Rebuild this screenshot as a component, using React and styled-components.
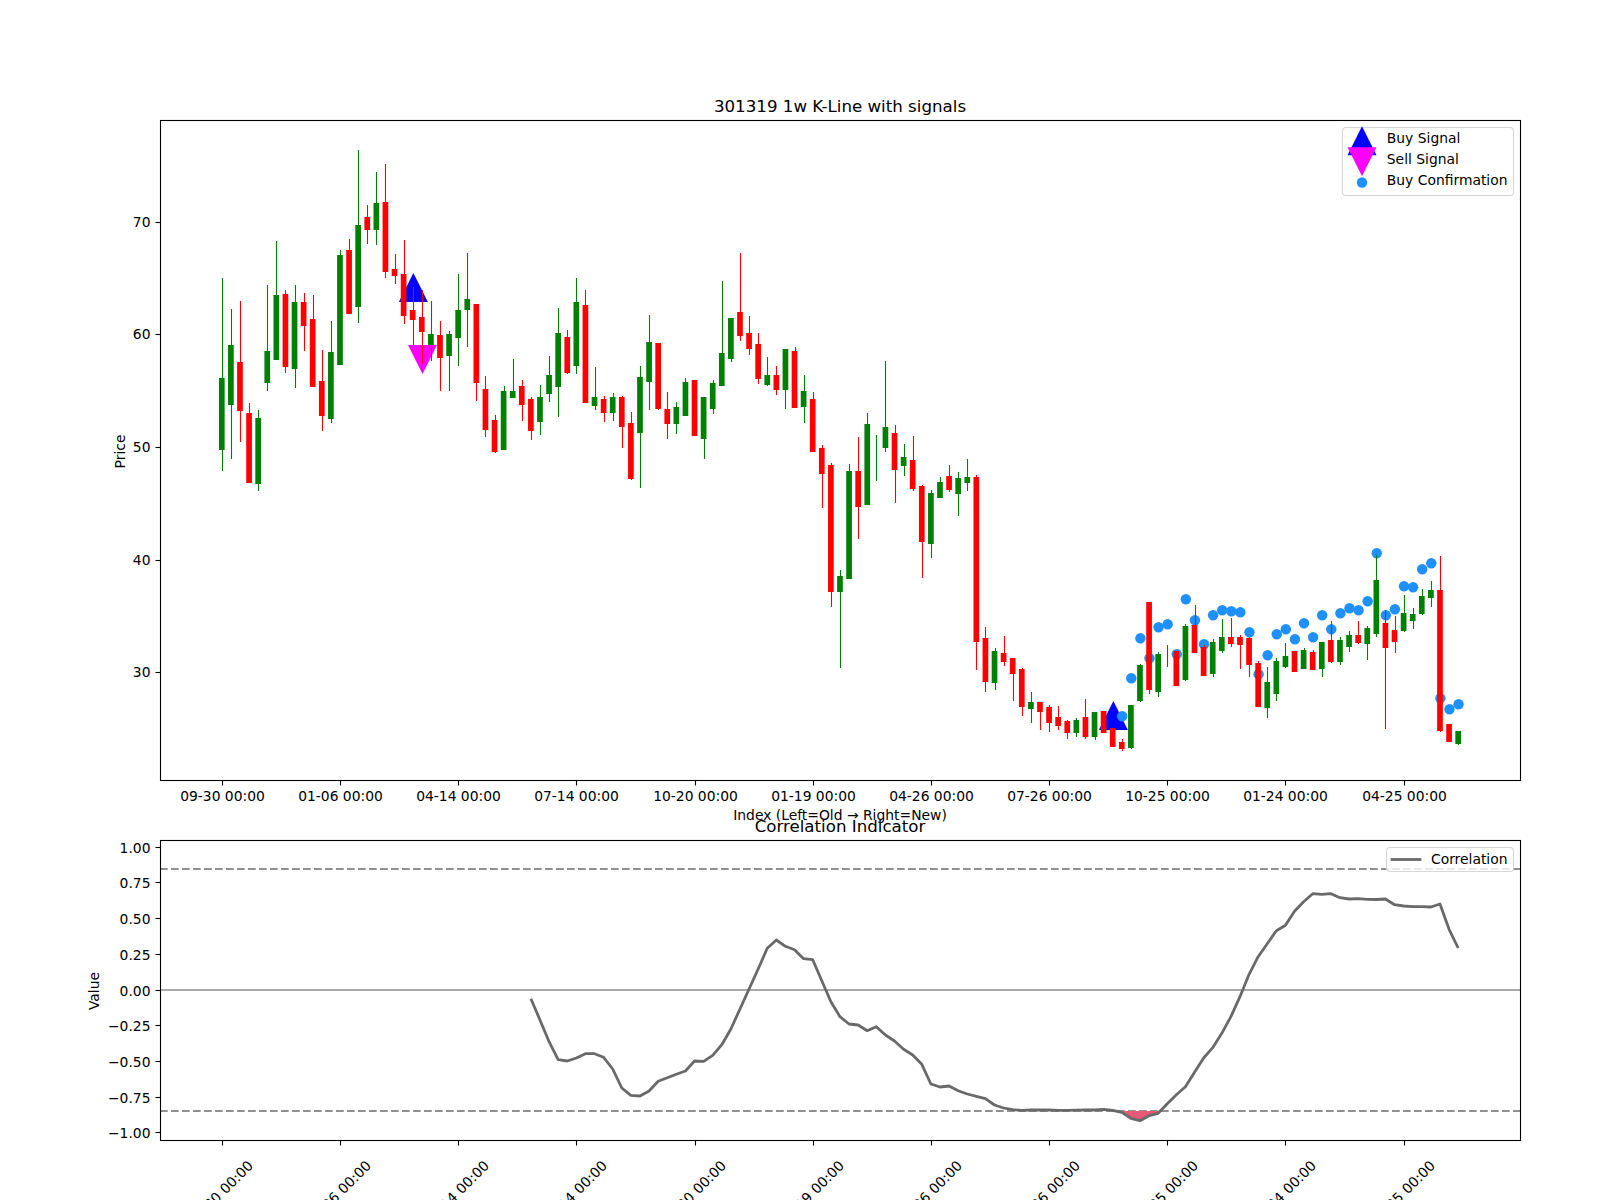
import styled, { createGlobalStyle } from 'styled-components';

const GlobalStyle = createGlobalStyle`
  html, body {
    margin: 0;
    padding: 0;
    background: #fff;
  }
`;

const Figure = styled.div`
  width: 1600px;
  height: 1200px;
  box-sizing: border-box;
  padding: 120px 0 0 160px;
  display: flex;
  flex-direction: column;
  gap: 60px;
  overflow: hidden;
  background: #fff;
  font-family: "DejaVu Sans", sans-serif;
`;

const Axes = styled.div`
  position: relative;
  width: 1360px;
  height: ${props => props.h}px;
`;

const Plot = styled.svg`
  display: block;
  overflow: visible;
`;

const Title = styled.text`
  font-family: "DejaVu Sans", sans-serif;
  font-size: 16.67px;
  text-anchor: middle;
  fill: #000;
`;

const AxisLabel = styled.text`
  font-family: "DejaVu Sans", sans-serif;
  font-size: 13.89px;
  text-anchor: middle;
  fill: #000;
`;

const TickLabel = styled.text`
  font-family: "DejaVu Sans", sans-serif;
  font-size: 13.89px;
  text-anchor: ${props => props.anchor || 'middle'};
  dominant-baseline: central;
  fill: #000;
`;

const Legend = styled.div`
  position: absolute;
  top: 7px;
  right: 6px;
  box-sizing: border-box;
  padding: ${props => props.pad};
  display: flex;
  flex-direction: column;
  background: rgba(255, 255, 255, 0.8);
  border: 1px solid rgba(204, 204, 204, 0.8);
  border-radius: 4px;
`;

const LegendRow = styled.div`
  display: flex;
  align-items: center;
  gap: 11px;
  height: 21px;
  font-size: 13.89px;
  color: #000;
  white-space: nowrap;
`;

const LegendText = styled.span`
  margin-top: -2px;
`;

const LegendMark = styled.svg`
  display: block;
  flex: none;
  overflow: visible;
`;

// pixel rows read off the chart: colour, wick top, body top, body bottom, wick bottom
const candles = [
  ['g', 278, 378, 450, 471], ['g', 309, 345, 405, 459], ['r', 301, 362, 411, 442], ['r', 403, 413, 483, 483],
  ['g', 410, 418, 484, 491], ['g', 285, 351, 383, 391], ['g', 241, 295, 360, 360], ['r', 290, 294, 367, 373],
  ['g', 285, 302, 369, 388], ['r', 293, 302, 326, 351], ['r', 295, 319, 387, 387], ['r', 350, 381, 416, 431],
  ['g', 321, 352, 419, 423], ['g', 250, 255, 365, 365], ['r', 239, 250, 314, 314], ['g', 150, 225, 307, 323],
  ['r', 205, 217, 230, 244], ['g', 172, 203, 230, 245], ['r', 164, 202, 272, 278], ['r', 254, 269, 276, 284],
  ['r', 240, 274, 316, 324], ['r', 287, 310, 320, 346], ['r', 290, 317, 332, 364], ['g', 301, 334, 345, 361],
  ['r', 321, 335, 358, 391], ['g', 331, 334, 356, 391], ['g', 274, 310, 338, 366], ['g', 253, 299, 310, 347],
  ['r', 304, 304, 383, 401], ['r', 376, 389, 430, 437], ['r', 415, 420, 452, 453], ['g', 386, 391, 450, 450],
  ['g', 359, 391, 398, 398], ['r', 380, 386, 405, 421], ['r', 397, 399, 431, 440], ['g', 385, 397, 422, 435],
  ['g', 356, 375, 394, 402], ['g', 308, 333, 387, 417], ['r', 330, 337, 373, 374], ['g', 278, 302, 366, 374],
  ['r', 290, 305, 403, 403], ['g', 367, 397, 406, 410], ['r', 396, 399, 413, 422], ['g', 393, 397, 413, 421],
  ['r', 396, 397, 427, 448], ['r', 412, 423, 479, 480], ['g', 366, 377, 433, 488], ['g', 315, 342, 382, 410],
  ['r', 343, 343, 409, 410], ['r', 392, 409, 424, 439], ['g', 402, 407, 424, 434], ['g', 378, 382, 416, 416],
  ['r', 380, 380, 436, 436], ['g', 397, 397, 439, 459], ['g', 380, 383, 409, 414], ['g', 281, 353, 386, 386],
  ['g', 318, 318, 359, 362], ['r', 253, 312, 336, 341], ['r', 316, 333, 349, 355], ['r', 333, 344, 379, 384],
  ['g', 357, 375, 385, 386], ['r', 366, 375, 390, 395], ['g', 349, 349, 390, 409], ['r', 347, 351, 408, 408],
  ['g', 375, 391, 407, 423], ['r', 392, 399, 452, 452], ['r', 445, 448, 474, 508], ['r', 463, 465, 592, 607],
  ['g', 570, 576, 592, 668], ['g', 464, 471, 579, 579], ['r', 437, 471, 507, 539], ['g', 413, 424, 505, 505],
  ['g', 435, 458, 458, 481], ['g', 361, 427, 448, 452], ['r', 425, 433, 470, 503], ['g', 444, 457, 466, 476],
  ['r', 436, 460, 489, 491], ['r', 485, 486, 542, 578], ['g', 490, 493, 544, 558], ['g', 477, 482, 498, 498],
  ['r', 465, 476, 490, 492], ['g', 472, 478, 494, 516], ['g', 459, 477, 483, 491], ['r', 475, 477, 642, 670],
  ['r', 627, 638, 682, 692], ['g', 648, 651, 683, 690], ['r', 636, 653, 662, 666], ['r', 658, 658, 674, 701],
  ['r', 668, 669, 707, 716], ['g', 692, 702, 709, 723], ['r', 702, 702, 712, 730], ['r', 705, 707, 723, 732],
  ['r', 706, 717, 726, 730], ['r', 720, 721, 733, 739], ['g', 718, 720, 733, 737], ['r', 699, 717, 737, 739],
  ['g', 712, 712, 737, 740], ['r', 711, 711, 733, 733], ['r', 728, 728, 747, 747], ['r', 739, 742, 749, 751],
  ['g', 705, 705, 748, 749], ['g', 664, 665, 701, 702], ['r', 602, 602, 690, 694], ['g', 652, 654, 692, 697],
  ['r', 645, 655, 655, 667], ['r', 651, 651, 686, 686], ['g', 624, 626, 680, 681], ['r', 605, 625, 653, 653],
  ['r', 645, 647, 676, 676], ['g', 639, 642, 674, 677], ['g', 619, 637, 651, 653], ['r', 618, 637, 644, 647],
  ['r', 635, 637, 645, 669], ['r', 637, 638, 665, 677], ['r', 661, 663, 707, 707], ['g', 667, 682, 708, 718],
  ['g', 658, 661, 694, 701], ['g', 643, 656, 667, 668], ['r', 651, 651, 672, 672], ['g', 648, 650, 669, 669],
  ['r', 650, 652, 670, 670], ['g', 642, 642, 669, 677], ['r', 621, 640, 662, 663], ['g', 637, 640, 662, 665],
  ['g', 631, 635, 647, 652], ['r', 621, 635, 643, 644], ['g', 626, 628, 644, 660], ['g', 555, 580, 634, 637],
  ['r', 610, 623, 648, 729], ['r', 616, 630, 642, 653], ['g', 595, 613, 631, 632], ['g', 608, 614, 621, 629],
  ['g', 589, 596, 614, 615], ['g', 581, 590, 598, 607], ['r', 556, 590, 731, 732], ['r', 724, 724, 742, 742],
  ['g', 731, 731, 744, 745],
];

// buy confirmation dots, from index 99 on
const dots = [
  716.3, 678.3, 638.3, 658.3, 627.3, 624.3, 654.3, 599.3, 620.3, 644.3, 615.3, 610.3, 611.3, 612.3,
  632.3, 674.3, 655.3, 634.3, 629.3, 639.3, 623.3, 637.3, 615.3, 629.3, 613.3, 608.3, 610.3, 601.3,
  553.3, 615.3, 609.3, 586.3, 587.3, 569.3, 563.3, 698.3, 709.3, 704.3,
];

// correlation line, from index 34 on
const corr = [
  998.7, 1020, 1041.7, 1059.7, 1061, 1058, 1053.7, 1053.7, 1057.3, 1069, 1088, 1095.3, 1096, 1091, 1081.3, 1077.7,
  1074.3, 1071, 1061, 1061.3, 1055.3, 1044.7, 1029, 1009, 989, 969, 948.3, 940, 946.3, 949.7, 958.7, 959.7,
  980.7, 1001.7, 1016.7, 1024, 1025, 1030.7, 1026.7, 1035, 1041, 1049.3, 1055, 1064.3, 1084, 1087, 1086, 1090.7,
  1094, 1096.3, 1098.7, 1105, 1108, 1109.7, 1110.3, 1110, 1110, 1110, 1110.3, 1110.3, 1110.2, 1110, 1110, 1109.3,
  1110.3, 1112.3, 1118.3, 1120.7, 1115.7, 1113.3, 1103.7, 1094.7, 1086.7, 1072.3, 1058, 1047.7, 1033.3, 1016.7,
  996.7, 974.3, 956.7, 943.7, 930.7, 925.3, 911.3, 901.7, 893.7, 894.3, 893.7, 897.7, 899, 898.7, 899.3, 899.5,
  899, 904.7, 906, 906.7, 906.7, 907, 904, 929.3, 948,
];

const xAt = i => 221.8 + 9.0909 * i;
const snap = v => Math.round(v) + 0.5;

const dateLabels = [
  '09-30 00:00', '01-06 00:00', '04-14 00:00', '07-14 00:00', '10-20 00:00', '01-19 00:00',
  '04-26 00:00', '07-26 00:00', '10-25 00:00', '01-24 00:00', '04-25 00:00',
];
const dateTicks = dateLabels.map((label, n) => ({ label, x: snap(xAt(n * 13)) }));

const priceTicks = [
  { label: '70', y: 222.5 },
  { label: '60', y: 334.5 },
  { label: '50', y: 447.5 },
  { label: '40', y: 560.5 },
  { label: '30', y: 672.5 },
];

const valueTicks = [1, 0.75, 0.5, 0.25, 0, -0.25, -0.5, -0.75, -1].map(v => ({
  label: v.toFixed(2).replace('-', '\u2212'),
  y: snap(990 - v * 142.86 - 0.5),
}));

const triangle = (x, y, down) =>
  down
    ? `${x - 14.5},${y} ${x + 14.5},${y} ${x},${y + 29}`
    : `${x},${y} ${x + 14.5},${y + 29} ${x - 14.5},${y + 29}`;

const Candle = ({ i, data }) => {
  const [c, wickTop, top, bottom, wickBottom] = data;
  const color = c === 'g' ? '#008000' : '#ff0000';
  const x = xAt(i);
  return (
    <g>
      <line x1={snap(x)} x2={snap(x)} y1={wickTop} y2={wickBottom} stroke={color} strokeWidth="1.1" />
      {bottom > top && <rect x={x - 2.85} y={top} width="5.7" height={bottom - top} fill={color} />}
    </g>
  );
};

const PriceChart = () => (
  <Axes h={660}>
    <Plot viewBox="160 120 1360 660" width="1360" height="660">
      <Title x="840" y="111.7">301319 1w K-Line with signals</Title>

      <polygon points={triangle(413.4, 273, false)} fill="#0000ff" />
      <polygon points={triangle(422.5, 345, true)} fill="#ff00ff" />
      <polygon points={triangle(1113.4, 701, false)} fill="#0000ff" />
      {dots.map((y, n) => (
        <circle key={n} cx={xAt(n + 99) + 0.4} cy={y} r="5.2" fill="#1e90ff" />
      ))}
      {candles.map((data, i) => (
        <Candle key={i} i={i} data={data} />
      ))}

      <rect x="160.5" y="120.5" width="1360" height="660" fill="none" stroke="#000" strokeWidth="1.1" />
      {priceTicks.map(t => (
        <g key={t.label}>
          <line x1="155.5" x2="160.5" y1={t.y} y2={t.y} stroke="#000" strokeWidth="1.1" />
          <TickLabel x="150.5" y={t.y - 0.5} anchor="end">{t.label}</TickLabel>
        </g>
      ))}
      {dateTicks.map(t => (
        <g key={t.label}>
          <line x1={t.x} x2={t.x} y1="780.5" y2="785.5" stroke="#000" strokeWidth="1.1" />
          <TickLabel x={t.x} y="796">{t.label}</TickLabel>
        </g>
      ))}
      <AxisLabel x="840" y="820">Index (Left=Old → Right=New)</AxisLabel>
      <AxisLabel transform="translate(125 451.5) rotate(-90)">Price</AxisLabel>
    </Plot>
    <Legend pad="0 5.5px 4px 4.5px">
      <LegendRow>
        <LegendMark width="28" height="21" viewBox="0 0 28 21">
          <polygon points="14,-1.8 28.5,27.2 -0.5,27.2" fill="#0000ff" />
        </LegendMark>
        <LegendText>Buy Signal</LegendText>
      </LegendRow>
      <LegendRow>
        <LegendMark width="28" height="21" viewBox="0 0 28 21">
          <polygon points="-0.5,-1.8 28.5,-1.8 14,27.2" fill="#ff00ff" />
        </LegendMark>
        <LegendText>Sell Signal</LegendText>
      </LegendRow>
      <LegendRow>
        <LegendMark width="28" height="21" viewBox="0 0 28 21">
          <circle cx="14" cy="12.5" r="5.2" fill="#1e90ff" />
        </LegendMark>
        <LegendText>Buy Confirmation</LegendText>
      </LegendRow>
    </Legend>
  </Axes>
);

const CorrelationChart = () => {
  const line = corr.map((y, n) => `${xAt(n + 34)},${y}`).join(' ');
  const below = corr.slice(99 - 34, 104 - 34).map((y, n) => `${xAt(n + 99)},${y}`);
  const fill = [`${xAt(99)},1111`, ...below, `${xAt(103)},1111`].join(' ');

  return (
    <Axes h={300}>
      <Plot viewBox="160 840 1360 300" width="1360" height="300">
        <Title x="840" y="831.7">Correlation Indicator</Title>

        <line x1="160" x2="1520" y1="869" y2="869" stroke="#909090" strokeWidth="2" strokeDasharray="7.7 3.3" />
        <line x1="160" x2="1520" y1="1111" y2="1111" stroke="#909090" strokeWidth="2" strokeDasharray="7.7 3.3" />
        <line x1="160" x2="1520" y1="990" y2="990" stroke="#aaaaaa" strokeWidth="2" />
        <polygon points={fill} fill="#e75a77" />
        <polyline points={line} fill="none" stroke="#696969" strokeWidth="2.78" strokeLinejoin="round" />

        <rect x="160.5" y="840.5" width="1360" height="300" fill="none" stroke="#000" strokeWidth="1.1" />
        {valueTicks.map(t => (
          <g key={t.label}>
            <line x1="155.5" x2="160.5" y1={t.y} y2={t.y} stroke="#000" strokeWidth="1.1" />
            <TickLabel x="150.5" y={t.y} anchor="end">{t.label}</TickLabel>
          </g>
        ))}
        {dateTicks.map(t => (
          <g key={t.label}>
            <line x1={t.x} x2={t.x} y1="1140.5" y2="1145.5" stroke="#000" strokeWidth="1.1" />
            <TickLabel x={t.x - 2} y="1193" transform={`rotate(-45 ${t.x - 2} 1193)`}>{t.label}</TickLabel>
          </g>
        ))}
        <AxisLabel transform="translate(99 991) rotate(-90)">Value</AxisLabel>
      </Plot>
      <Legend pad="1px 5.5px 1px 5.4px">
        <LegendRow>
          <LegendMark width="28" height="21" viewBox="0 0 28 21">
            <line x1="0" x2="28" y1="10.5" y2="10.5" stroke="#696969" strokeWidth="2.78" strokeLinecap="square" />
          </LegendMark>
          <LegendText>Correlation</LegendText>
        </LegendRow>
      </Legend>
    </Axes>
  );
};

const App = () => (
  <Figure>
    <GlobalStyle />
    <PriceChart />
    <CorrelationChart />
  </Figure>
);

export default App;
